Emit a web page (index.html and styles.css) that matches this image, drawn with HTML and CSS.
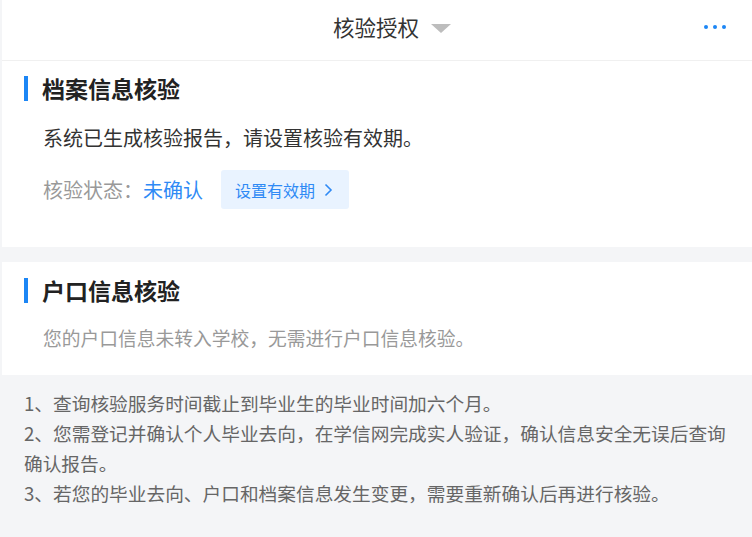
FILE: index.html
```html
<!DOCTYPE html>
<html lang="zh-CN">
<head>
    <meta charset="UTF-8">
    <meta name="viewport" content="width=device-width, initial-scale=1.0">
    <title>核验授权</title>
    <link rel="stylesheet" href="styles.css">
</head>
<body>
    <div class="page">
        <header class="topbar">
            <span></span>
            <div class="topbar-title">
                核验授权
                <span class="caret"></span>
            </div>
            <div class="more">
                <i></i><i></i><i></i>
            </div>
        </header>

        <section class="card card-archive">
            <h2 class="card-title">档案信息核验</h2>
            <p class="card-text">系统已生成核验报告，请设置核验有效期。</p>
            <div class="status-row">
                <span class="status-label">核验状态：</span>
                <span class="status-value">未确认</span>
                <a href="#" class="status-btn">
                    设置有效期
                    <svg width="9" height="14" viewBox="0 0 9 14"><polyline points="1.5,1.5 7,7 1.5,12.5" fill="none" stroke="#2f8af5" stroke-width="1.6"/></svg>
                </a>
            </div>
        </section>

        <section class="card card-hukou">
            <h2 class="card-title">户口信息核验</h2>
            <p class="card-text muted">您的户口信息未转入学校，无需进行户口信息核验。</p>
        </section>

        <div class="notes">
            <p>1、查询核验服务时间截止到毕业生的毕业时间加六个月。</p>
            <p>2、您需登记并确认个人毕业去向，在学信网完成实人验证，确认信息安全无误后查询确认报告。</p>
            <p>3、若您的毕业去向、户口和档案信息发生变更，需要重新确认后再进行核验。</p>
        </div>
    </div>
</body>
</html>
```

FILE: styles.css
```css
body {
    margin: 0;
    background-color: #f4f5f7;
    font-family: "Noto Sans CJK SC", "Noto Sans", sans-serif;
    color: #333;
}

.page {
    margin-left: 2px;
}

/* 顶部标题栏 */
.topbar {
    display: grid;
    grid-template-columns: 1fr auto 1fr;
    align-items: center;
    box-sizing: border-box;
    height: 61px;
    padding-bottom: 7px;
    background: #fff;
    border-bottom: 1px solid #f0f0f0;
}

.topbar-title {
    display: flex;
    align-items: center;
    font-size: 21.5px;
    color: #333;
    padding-left: 30px; /* 让文字本身居中 */
}

.caret {
    width: 0;
    height: 0;
    margin-left: 12px;
    margin-top: 3px;
    border-left: 10px solid transparent;
    border-right: 10px solid transparent;
    border-top: 9px solid #bdbdbd;
}

.more {
    justify-self: end;
    display: flex;
    gap: 5px;
    padding-right: 26px;
}

.more i {
    width: 4px;
    height: 4px;
    border-radius: 50%;
    background: #1c86f5;
}

/* 卡片 */
.card {
    background: #fff;
    padding: 15px 0 38px 22px;
}

.card-hukou {
    margin-top: 15px;
    padding-top: 16px;
    padding-bottom: 22px;
}

.card-title {
    margin: 0;
    height: 25px;
    line-height: 25px;
    padding-left: 14px;
    border-left: 4px solid #1c86f5;
    font-size: 23px;
    font-weight: bold;
    color: #222;
}

.card-text {
    margin: 22px 0 0 19px;
    font-size: 20px;
    line-height: 30px;
    color: #333;
}

.card-text.muted {
    margin-top: 20px;
    font-size: 18.75px;
    color: #999;
}

.status-row {
    display: flex;
    align-items: center;
    margin: 17px 0 0 19px;
    font-size: 20px;
}

.status-label {
    color: #999;
}

.status-value {
    color: #2f8af5;
}

.status-btn {
    display: flex;
    align-items: center;
    gap: 9px;
    height: 39px;
    margin-left: 18px;
    padding: 0 16px 0 14px;
    background: #e9f3ff;
    border-radius: 3px;
    color: #2f8af5;
    font-size: 16px;
    text-decoration: none;
}

/* 说明 */
.notes {
    padding: 13px 24px 20px 22px;
    font-size: 18.7px;
    line-height: 30px;
    color: #666;
}

.notes p {
    margin: 0;
}
```
